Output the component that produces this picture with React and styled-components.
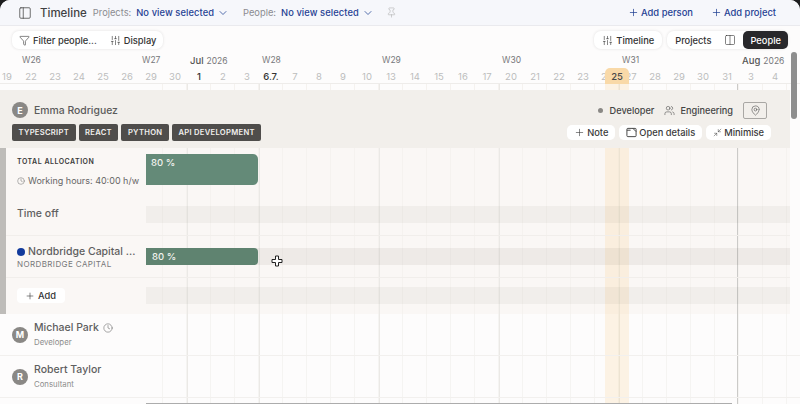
import React from 'react';
import styled, { createGlobalStyle } from 'styled-components';
import {
  PanelLeft,
  ChevronDown,
  Pin,
  Plus,
  Funnel,
  SlidersVertical,
  Columns2,
  MapPin,
  Users,
  Clock,
  Minimize2,
} from 'lucide-react';

const GlobalStyle = createGlobalStyle`
  html, body {
    margin: 0;
    padding: 0;
    background: #1d1d1f;
  }
  * {
    box-sizing: border-box;
  }
`;

const Page = styled.div`
  position: relative;
  width: 800px;
  height: 404px;
  overflow: hidden;
  border-radius: 10px 10px 0 0;
  background: #fdfcfc;
  font-family: Inter, 'Liberation Sans', sans-serif;
  color: #444;
`;

// 상단 헤더
const Header = styled.header`
  display: flex;
  align-items: center;
  height: 26px;
  padding: 0 24px 0 18px;
  background: #f6f7fb;
  border-bottom: 1px solid #eaeaee;
`;

const Title = styled.h1`
  margin: 0 6px 0 8px;
  font-size: 11.5px;
  font-weight: 500;
  color: #3f3f42;
`;

const ViewLabel = styled.span`
  margin-right: 5px;
  font-size: 9.3px;
  color: #8b8b90;
`;

const ViewValue = styled.span`
  display: flex;
  align-items: center;
  gap: 3px;
  margin-right: ${({ $gap }) => $gap}px;
  font-size: 9.3px;
  font-weight: 500;
  letter-spacing: 0.1px;
  color: #1f4193;
`;

const HeaderLink = styled.span`
  display: flex;
  align-items: center;
  gap: 2px;
  margin-left: ${({ $auto }) => ($auto ? 'auto' : '18px')};
  font-size: 9.4px;
  font-weight: 500;
  color: #1f4193;
`;

// 툴바
const Toolbar = styled.div`
  display: flex;
  align-items: flex-start;
  height: 28px;
  padding: 5px 12px 0;
  gap: 5px;
`;

const Pill = styled.div`
  display: flex;
  align-items: center;
  height: 18px;
  padding: 0 ${({ $pad }) => $pad ?? 8}px;
  gap: ${({ $gap }) => $gap ?? 3}px;
  margin-right: ${({ $push }) => ($push ? 'auto' : 0)};
  border-radius: 7px;
  background: #fff;
  box-shadow: 0 0 3px rgba(60, 60, 60, 0.14);
  font-size: 9.3px;
  font-weight: 500;
  color: #333;
`;

const PillItem = styled.span`
  display: flex;
  align-items: center;
  gap: 3px;
  margin-left: ${({ $left }) => $left ?? 0}px;
`;

const Toggle = styled.span`
  display: flex;
  align-items: center;
  height: 100%;
  padding: 0 ${({ $active }) => ($active ? 7 : 8)}px;
  margin-left: ${({ $active }) => ($active ? 7 : 0)}px;
  margin-right: ${({ $active }) => ($active ? 0 : 5)}px;
  border-radius: ${({ $active }) => ($active ? '5px' : 0)};
  background: ${({ $active }) => ($active ? '#28282b' : 'transparent')};
  color: ${({ $active }) => ($active ? '#fff' : '#333')};
`;

// 타임라인 눈금
const Scale = styled.div`
  position: relative;
  display: grid;
  grid-template-columns: repeat(34, 24px);
  grid-template-rows: 14px 15px;
  margin-left: -5px;
  width: 816px;
  border-bottom: 1px solid #eeecea;
`;

const WeekLabel = styled.span`
  grid-row: 1;
  grid-column: ${({ $col }) => $col} / span 2;
  padding-left: 3px;
  font-size: 8.5px;
  line-height: 13px;
  white-space: nowrap;
  color: #77777a;
`;

const MonthLabel = styled(WeekLabel)`
  grid-column: ${({ $col }) => $col} / span 3;
  font-size: 9.5px;
  font-weight: 500;
  color: #555;

  small {
    margin-left: 3px;
    font-size: 8.5px;
    font-weight: 400;
    color: #77777a;
  }
`;

const DayCell = styled.span`
  grid-row: 2;
  text-align: center;
  font-size: 9.5px;
  line-height: 17px;
  font-weight: ${({ $strong }) => ($strong ? 500 : 400)};
  color: ${({ $strong }) => ($strong ? '#333' : '#bcbcbc')};
`;

const TodayChip = styled.span`
  position: absolute;
  left: 610px;
  top: 14px;
  width: 24px;
  height: 16px;
  border-radius: 5px 5px 0 0;
  background: #f9d9a8;
  text-align: center;
  font-size: 9.5px;
  line-height: 17px;
  font-weight: 500;
  color: #4a4a4a;
`;

const TickStrip = styled.div`
  position: relative;
  height: 6px;
`;

// 그리드 라인 레이어
const Lines = styled.div`
  position: absolute;
  top: 0;
  bottom: 0;
  left: ${({ $left }) => $left}px;
  width: 644px;
  background-image: repeating-linear-gradient(
    90deg,
    transparent 0 16px,
    ${({ $faint }) => $faint} 16px 17px,
    transparent 17px 24px
  );
`;

const VLine = styled.i`
  position: absolute;
  top: 0;
  bottom: 0;
  left: ${({ $x }) => $x - 146}px;
  width: 1px;
  background: ${({ $dark }) => ($dark ? '#cbcac8' : '#ebe9e6')};
`;

const TodayBand = styled.i`
  position: absolute;
  top: 0;
  bottom: 0;
  left: 459px;
  width: 24px;
  background: rgba(249, 198, 120, 0.18);
`;

// 선택된 사람 카드
const CardHead = styled.div`
  display: flex;
  flex-direction: column;
  height: 58px;
  margin-right: 10px;
  padding: 9px 21px 0 12px;
  background: #f2efeb;
`;

const HeadLine = styled.div`
  display: flex;
  align-items: center;
  height: 22px;
  padding-right: 2px;
`;

const TagLine = styled.div`
  display: flex;
  align-items: center;
  gap: 3px;
  margin-top: 3px;
  margin-right: -2px;
`;

const Avatar = styled.span`
  display: flex;
  align-items: center;
  justify-content: center;
  flex: none;
  width: 16px;
  height: 16px;
  margin-top: ${({ $drop }) => $drop ?? 0}px;
  border-radius: 50%;
  background: #8a8885;
  font-size: 9px;
  font-weight: 700;
  color: #fff;
`;

const CardName = styled.span`
  margin-left: 6px;
  margin-right: auto;
  font-size: 10.4px;
  font-weight: 500;
  color: #5b5b5b;
`;

const Dot = styled.span`
  width: 5px;
  height: 5px;
  border-radius: 50%;
  background: #8a8885;
`;

const Meta = styled.span`
  display: flex;
  align-items: center;
  gap: 5px;
  margin-left: ${({ $left }) => $left}px;
  font-size: 9.2px;
  font-weight: 500;
  color: #444;
`;

const LocationButton = styled.span`
  display: flex;
  align-items: center;
  justify-content: center;
  width: 24px;
  height: 17px;
  margin-left: 10px;
  border: 1px solid #a9a7a4;
  border-radius: 2px;
  color: #444;
`;

const Tag = styled.span`
  display: flex;
  align-items: center;
  height: 17px;
  padding: 0 6.5px;
  border-radius: 2px;
  background: #4f4d4b;
  font-size: 7.6px;
  font-weight: 600;
  letter-spacing: 0.3px;
  color: #f2f0ee;
`;

const CardAction = styled.span`
  display: flex;
  align-items: center;
  gap: 2px;
  height: 15px;
  margin-left: ${({ $auto }) => ($auto ? 'auto' : '1px')};
  padding: 0 7px;
  border-radius: 5px;
  background: #fff;
  font-size: 9.3px;
  font-weight: 500;
  color: #3a3a3a;
`;

const CardBody = styled.div`
  position: relative;
  margin-right: 10px;
  border-left: 6px solid #bebcb9;
  background: #faf7f5;
`;

const Row = styled.div`
  position: relative;
  display: grid;
  grid-template-columns: 140px 1fr;
  height: ${({ $h }) => $h}px;
  border-bottom: ${({ $line }) => ($line ? '1px solid #f1eeeb' : '0')};
`;

const RowLabel = styled.div`
  display: flex;
  flex-direction: column;
  padding: ${({ $top }) => $top}px 0 0 11px;
`;

const Track = styled.div`
  display: flex;
  flex-direction: column;
  padding-top: ${({ $top }) => $top}px;
`;

const Strip = styled.div`
  height: 17px;
  background: ${({ $dark }) => ($dark ? 'rgba(80, 70, 60, 0.07)' : 'rgba(80, 70, 60, 0.05)')};
`;

const AllocationBar = styled.div`
  display: flex;
  align-items: ${({ $tall }) => ($tall ? 'flex-start' : 'center')};
  width: 112px;
  height: ${({ $tall }) => ($tall ? 31 : 17)}px;
  padding: ${({ $tall }) => ($tall ? '3px 5px' : '0 6px')};
  border-radius: ${({ $tall }) => ($tall ? '0 5px 5px 0' : '0 4px 4px 0')};
  background: ${({ $tall }) => ($tall ? '#648a78' : '#5f8370')};
  font-size: 9.5px;
  font-weight: 500;
  color: #f2f2ee;
`;

const SmallCaps = styled.span`
  font-size: 7px;
  font-weight: 600;
  letter-spacing: 0.5px;
  line-height: 14px;
  color: #3a3a3a;
`;

const SubCaps = styled.span`
  font-size: 8px;
  letter-spacing: 0.4px;
  line-height: 13px;
  white-space: nowrap;
  color: #77777a;
`;

const Hours = styled.span`
  display: flex;
  align-items: center;
  gap: 3px;
  margin-top: 6px;
  font-size: 9px;
  white-space: nowrap;
  color: #666;
`;

const LabelText = styled.span`
  display: flex;
  align-items: center;
  gap: 3px;
  font-size: 10.5px;
  font-weight: 500;
  white-space: nowrap;
  color: #5f5f5f;
`;

const ProjectDot = styled.span`
  width: 8px;
  height: 8px;
  border-radius: 50%;
  background: #123a9c;
`;

const AddButton = styled.span`
  display: flex;
  align-items: center;
  gap: 3px;
  width: 48px;
  height: 15px;
  padding-left: 8px;
  border-radius: 4px;
  background: #fff;
  font-size: 9.3px;
  font-weight: 500;
  color: #333;
`;

// 접힌 사람 행
const PersonRow = styled.div`
  position: relative;
  display: flex;
  align-items: center;
  gap: 6px;
  height: 42px;
  padding: 0 0 2px 12px;
  border-bottom: 1px solid #f2f0ee;
`;

const PersonInfo = styled.div`
  display: flex;
  flex-direction: column;
  margin-top: 1px;
`;

const PersonName = styled.span`
  display: flex;
  align-items: center;
  gap: 4px;
  font-size: 10.5px;
  font-weight: 500;
  line-height: 16px;
  color: #5f5f5f;
`;

const PersonRole = styled.span`
  margin-top: 1px;
  font-size: 7.8px;
  line-height: 11px;
  color: #8d8d8d;
`;

const PeopleList = styled.div`
  position: relative;
  height: 90px;
`;

const BottomRule = styled.i`
  position: absolute;
  left: 146px;
  bottom: 0;
  width: 586px;
  height: 1px;
  background: #acacac;
`;

const ScrollThumb = styled.i`
  position: absolute;
  top: 52px;
  right: 3px;
  width: 6px;
  height: 67px;
  border-radius: 3px;
  background: #8e8e8e;
`;

const MoveCursor = styled.svg`
  position: absolute;
  left: 271px;
  top: 255px;
`;

const days = [19, 22, 23, 24, 25, 26, 29, 30, 1, 2, 3, '6.7.', 7, 8, 9, 10, 13, 14, 15, 16, 17, 20, 21, 22, 23, 24, 27, 28, 29, 30, 31, 3, 4];
const weekLines = [187, 259, 379, 499, 619];

function GridLines({ left = 146, faint = '#f5f2ef' }) {
  return (
    <Lines $left={left} $faint={faint}>
      {weekLines.map((x) => (
        <VLine key={x} $x={x} />
      ))}
      <VLine $x={737} $dark />
      <TodayBand />
    </Lines>
  );
}

function OpenDetailsIcon() {
  return (
    <svg width="11" height="11" viewBox="0 0 12 12" fill="none" stroke="currentColor" strokeWidth="1">
      <rect x="1" y="1.5" width="10" height="9" rx="1" />
      <path d="M7.5 1.5 11 5M1 3.5h4" />
    </svg>
  );
}

function App() {
  return (
    <Page>
      <GlobalStyle />
      <Header>
        <PanelLeft size={14} strokeWidth={1.3} color="#444" />
        <Title>Timeline</Title>
        <ViewLabel>Projects:</ViewLabel>
        <ViewValue $gap={14}>
          No view selected <ChevronDown size={12} strokeWidth={1.5} />
        </ViewValue>
        <ViewLabel>People:</ViewLabel>
        <ViewValue $gap={12}>
          No view selected <ChevronDown size={12} strokeWidth={1.5} />
        </ViewValue>
        <Pin size={11} strokeWidth={1.2} color="#aaa" />
        <HeaderLink $auto>
          <Plus size={11} strokeWidth={1.6} /> Add person
        </HeaderLink>
        <HeaderLink>
          <Plus size={11} strokeWidth={1.6} /> Add project
        </HeaderLink>
      </Header>

      <Toolbar>
        <Pill $push $pad={7}>
          <PillItem>
            <Funnel size={11} strokeWidth={1.3} /> Filter people...
          </PillItem>
          <PillItem $left={10}>
            <SlidersVertical size={11} strokeWidth={1.3} /> Display
          </PillItem>
        </Pill>
        <Pill>
          <SlidersVertical size={11} strokeWidth={1.3} /> Timeline
        </Pill>
        <Pill $pad={0} $gap={0}>
          <Toggle>Projects</Toggle>
          <Columns2 size={12} strokeWidth={1.2} />
          <Toggle $active>People</Toggle>
        </Pill>
      </Toolbar>

      <Scale>
        <WeekLabel $col={2}>W26</WeekLabel>
        <WeekLabel $col={7}>W27</WeekLabel>
        <MonthLabel $col={9}>
          Jul<small>2026</small>
        </MonthLabel>
        <WeekLabel $col={12}>W28</WeekLabel>
        <WeekLabel $col={17}>W29</WeekLabel>
        <WeekLabel $col={22}>W30</WeekLabel>
        <WeekLabel $col={27}>W31</WeekLabel>
        <MonthLabel $col={32}>
          Aug<small>2026</small>
        </MonthLabel>
        {days.map((day, i) => (
          <DayCell key={i} $strong={day === 1 || day === '6.7.'}>
            {day}
          </DayCell>
        ))}
        <TodayChip>25</TodayChip>
      </Scale>

      <TickStrip>
        <GridLines />
      </TickStrip>

      <CardHead>
        <HeadLine>
          <Avatar>E</Avatar>
          <CardName>Emma Rodriguez</CardName>
          <Dot />
          <Meta $left={7}>Developer</Meta>
          <Meta $left={10}>
            <Users size={11} strokeWidth={1.2} /> Engineering
          </Meta>
          <LocationButton>
            <MapPin size={11} strokeWidth={1.2} />
          </LocationButton>
        </HeadLine>
        <TagLine>
          <Tag>TYPESCRIPT</Tag>
          <Tag>REACT</Tag>
          <Tag>PYTHON</Tag>
          <Tag>API DEVELOPMENT</Tag>
          <CardAction $auto>
            <Plus size={11} strokeWidth={1.3} /> Note
          </CardAction>
          <CardAction>
            <OpenDetailsIcon /> Open details
          </CardAction>
          <CardAction>
            <Minimize2 size={9} strokeWidth={1.3} /> Minimise
          </CardAction>
        </TagLine>
      </CardHead>

      <CardBody>
        <GridLines left={140} />
        <Row $h={52}>
          <RowLabel $top={7}>
            <SmallCaps>TOTAL ALLOCATION</SmallCaps>
            <Hours>
              <Clock size={8} strokeWidth={1.4} /> Working hours: 40:00 h/w
            </Hours>
          </RowLabel>
          <Track $top={6}>
            <AllocationBar $tall>80 %</AllocationBar>
          </Track>
        </Row>
        <Row $h={36} $line>
          <RowLabel $top={7}>
            <LabelText>Time off</LabelText>
          </RowLabel>
          <Track $top={6}>
            <Strip />
          </Track>
        </Row>
        <Row $h={42} $line>
          <RowLabel $top={9}>
            <LabelText>
              <ProjectDot /> Nordbridge Capital ...
            </LabelText>
            <SubCaps>NORDBRIDGE CAPITAL</SubCaps>
          </RowLabel>
          <Track $top={12}>
            <Strip $dark>
              <AllocationBar>80 %</AllocationBar>
            </Strip>
          </Track>
        </Row>
        <Row $h={36}>
          <RowLabel $top={10}>
            <AddButton>
              <Plus size={10} strokeWidth={1.4} /> Add
            </AddButton>
          </RowLabel>
          <Track $top={9}>
            <Strip />
          </Track>
        </Row>
      </CardBody>

      <PeopleList>
        <GridLines faint="#f5f4f2" />
        <PersonRow>
          <Avatar $drop={2}>M</Avatar>
          <PersonInfo>
            <PersonName>
              Michael Park <Clock size={10} strokeWidth={1.3} />
            </PersonName>
            <PersonRole>Developer</PersonRole>
          </PersonInfo>
        </PersonRow>
        <PersonRow>
          <Avatar $drop={2}>R</Avatar>
          <PersonInfo>
            <PersonName>Robert Taylor</PersonName>
            <PersonRole>Consultant</PersonRole>
          </PersonInfo>
        </PersonRow>
        <BottomRule />
      </PeopleList>

      <ScrollThumb />
      <MoveCursor width="12" height="12" viewBox="0 0 12 12">
        <path
          d="M4.5 1h3v3.5H11v3H7.5V11h-3V7.5H1v-3h3.5z"
          fill="#fff"
          stroke="#222"
          strokeWidth="1"
          strokeLinejoin="round"
        />
      </MoveCursor>
    </Page>
  );
}

export default App;
